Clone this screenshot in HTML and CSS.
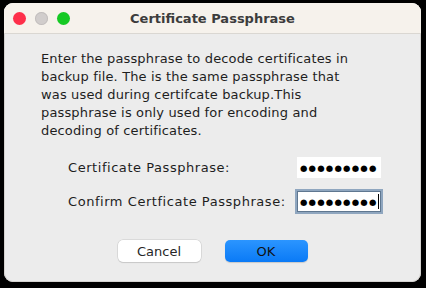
FILE: index.html
```html
<!DOCTYPE html>
<html lang="en">
<head>
    <meta charset="UTF-8">
    <title>Certificate Passphrase</title>
    <link rel="stylesheet" href="styles.css">
</head>
<body>
    <div class="window">
        <div class="titlebar">
            <div class="lights">
                <span class="light red"></span>
                <span class="light gray"></span>
                <span class="light green"></span>
            </div>
            <h1>Certificate Passphrase</h1>
        </div>

        <div class="content">
            <p class="message">Enter the passphrase to decode certificates in backup file. The is the same passphrase that was used during certifcate backup.This passphrase is only used for encoding and decoding of certificates.</p>

            <div class="form">
                <label for="pass">Certificate Passphrase:</label>
                <div class="field" id="pass">&#9679;&#9679;&#9679;&#9679;&#9679;&#9679;&#9679;&#9679;&#9679;</div>

                <label for="confirm">Confirm Certficate Passphrase:</label>
                <div class="field focused" id="confirm">&#9679;&#9679;&#9679;&#9679;&#9679;&#9679;&#9679;&#9679;&#9679;<span class="caret"></span></div>
            </div>

            <div class="buttons">
                <button class="button">Cancel</button>
                <button class="button primary">OK</button>
            </div>
        </div>
    </div>
</body>
</html>
```

FILE: styles.css
```css
body {
    margin: 0;
    padding: 3px 0 0 4px;
    background-color: #000;
    font-family: 'DejaVu Sans', sans-serif;
    color: #1e1e1e;
}
.window {
    width: 417px;
    height: 279px;
    background-color: #ececec;
    border-radius: 9px;
    overflow: hidden;
    box-shadow: inset 0 0 0 1px #d4d2cf;
}
.titlebar {
    position: relative;
    height: 30px;
    background-color: #f6f2ec;
    border-bottom: 1px solid #dad7d2;
    display: flex;
    align-items: center;
    justify-content: center;
}
.lights {
    position: absolute;
    left: 9px;
    top: 9px;
    display: flex;
    gap: 9px;
}
.light {
    width: 13px;
    height: 13px;
    border-radius: 50%;
}
.red {
    background-color: #fe2f4a;
}
.gray {
    background-color: #d1cdcc;
    box-shadow: inset 0 0 0 1px #c2bebd;
}
.green {
    background-color: #15c924;
}
.titlebar h1 {
    margin: 0;
    font-size: 13px;
    font-weight: bold;
    color: #3c3c3c;
}
.content {
    padding: 16px 0 0 37px;
}
.message {
    margin: 0;
    width: 328px;
    font-size: 13px;
    letter-spacing: 0.15px;
    line-height: 18px;
}
.form {
    display: grid;
    grid-template-columns: 229px 84px;
    row-gap: 13px;
    align-items: center;
    margin: 17px 0 0 27px;
    font-size: 13px;
    letter-spacing: 0.55px;
}
.field {
    height: 21px;
    background-color: #fff;
    font-size: 8.5px;
    letter-spacing: 1.2px;
    padding-left: 3px;
    color: #000;
    box-sizing: border-box;
    display: flex;
    align-items: center;
}
.focused {
    outline: 2px solid #8fa6bf;
    outline-offset: 0;
    border: 1px solid #5f7790;
    padding-left: 2px;
}
.caret {
    display: inline-block;
    width: 1px;
    height: 15px;
    background-color: #000;
}
.buttons {
    display: flex;
    justify-content: center;
    gap: 24px;
    margin: 28px 37px 0 0;
}
.button {
    width: 83px;
    height: 22px;
    border: none;
    border-radius: 5px;
    background-color: #fff;
    box-shadow: 0 0 0 0.5px #c8c8c8, 0 1px 1px rgba(0, 0, 0, 0.15);
    font-family: inherit;
    font-size: 13px;
    color: #262626;
    padding: 0;
}
.primary {
    background: linear-gradient(#2b95ff, #0a7af6);
    color: #111;
    box-shadow: 0 1px 1px rgba(0, 0, 0, 0.15);
}
```
